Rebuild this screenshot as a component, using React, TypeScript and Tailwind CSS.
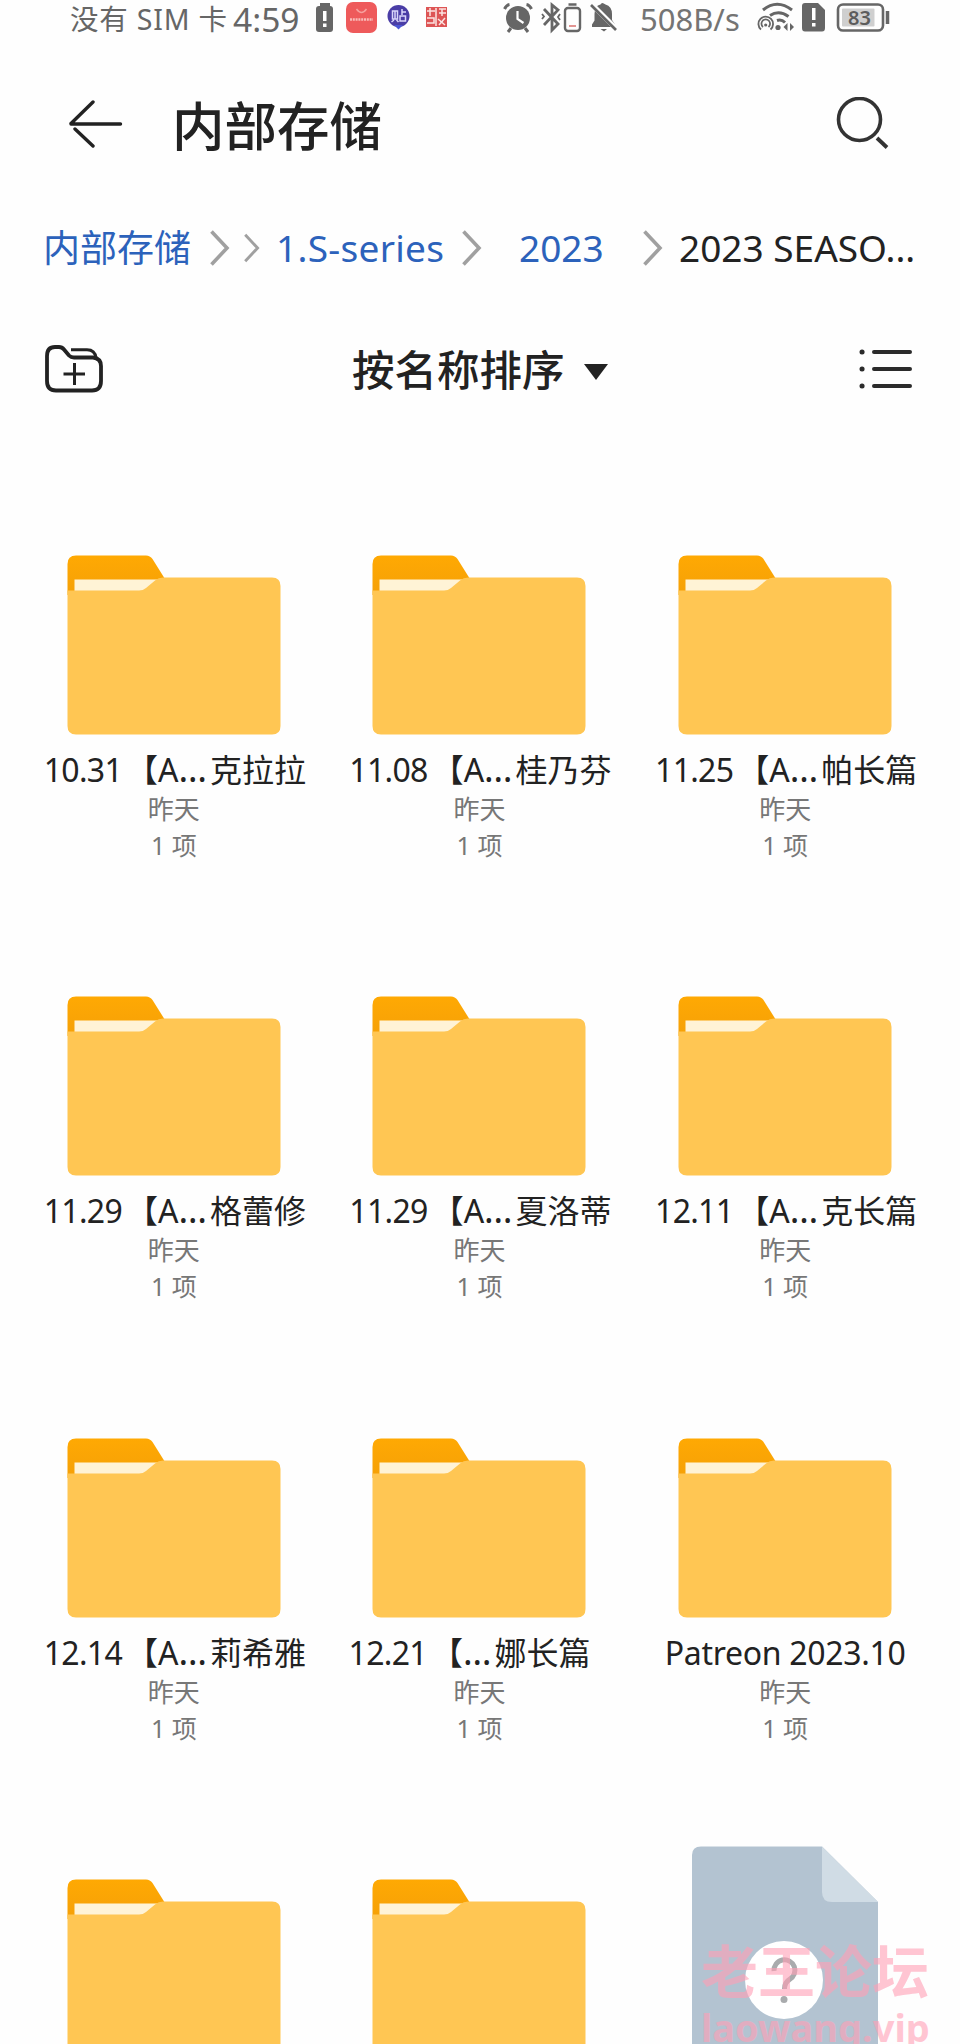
interface Item {
  date?: string;
  head?: string;
  tail?: string;
  name?: string;
  alignLeft?: boolean;
}

const items: Item[] = [
  { date: "10.31", head: "【A", tail: "克拉拉" },
  { date: "11.08", head: "【A", tail: "桂乃芬" },
  { date: "11.25", head: "【A", tail: "帕长篇" },
  { date: "11.29", head: "【A", tail: "格蕾修" },
  { date: "11.29", head: "【A", tail: "夏洛蒂" },
  { date: "12.11", head: "【A", tail: "克长篇" },
  { date: "12.14", head: "【A", tail: "莉希雅" },
  { date: "12.21", head: "【", tail: "娜长篇", alignLeft: true },
  { name: "Patreon 2023.10" },
];

function FolderIcon() {
  return (
    <svg className="block w-[214px] h-[180px]" viewBox="0 0 214 180">
      <defs>
        <linearGradient id="tab" x1="0" y1="0" x2="0" y2="1">
          <stop offset="0" stopColor="#ffa903" />
          <stop offset="1" stopColor="#f5a007" />
        </linearGradient>
      </defs>
      <path d="M0.5 40V9Q0.5 0.5 9 0.5H79Q83 0.5 85.500 4L98 24V40Z" fill="url(#tab)" />
      <path d="M7.500 24.500H94V40H7.500Z" fill="#fff3d6" />
      <path
        d="M0.5 35.500H72Q76 35.500 79 33L88 25.500Q91.500 22.500 96 22.500H205Q213.500 22.500 213.500 31V171Q213.500 179.500 205 179.500H9Q0.5 179.500 0.5 171Z"
        fill="#ffc653"
      />
    </svg>
  );
}

function UnknownFileIcon() {
  return (
    <svg className="block w-[188px] h-[240px]" viewBox="0 0 188 240">
      <path d="M1 240V9Q1 0.5 10 0.5H131L187 56V240Z" fill="#b3c3d1" />
      <path d="M131 0.5L187 56H141Q131 56 131 46Z" fill="#d0dce5" />
      <circle cx="93" cy="134" r="39" fill="#fff" />
      <path
        d="M83 125A10.500 10.500 0 1 1 98.500 133.500Q93.500 136.500 93.500 143"
        fill="none"
        stroke="#a9abad"
        strokeWidth="5"
      />
      <circle cx="93" cy="153.500" r="3.500" fill="#a9abad" />
    </svg>
  );
}

function Chevron({ className }: { className?: string }) {
  return (
    <svg className={className} viewBox="0 0 20 36" fill="none" stroke="#a0a0a0" strokeWidth="3.600">
      <path d="M1.500 1.500L17 18L1.500 34.500" />
    </svg>
  );
}

function ItemName({ item }: { item: Item }) {
  if (item.name) {
    return <div className="mt-[12px] h-[46px] whitespace-nowrap text-[32px] leading-[46px] tracking-[-0.3px]">{item.name}</div>;
  }
  return (
    <div className={`mt-[12px] flex h-[46px] items-baseline whitespace-nowrap pl-[2px] text-[32px] leading-[46px] ${item.alignLeft ? "pr-[22px]" : ""}`}>
      <span className="tracking-[-0.7px]">{item.date}</span>
      <span className="ml-[4px]">{item.head}</span>
      <span className="text-[36px] leading-[40px] tracking-[3px]">…</span>
      <span>{item.tail}</span>
    </div>
  );
}

function StatusBar() {
  return (
    <div className="flex h-[40px] items-start pl-[70px] text-[#666]">
      <span className="w-[163px] shrink-0 whitespace-nowrap text-[28.5px] leading-[38px] tracking-[0.8px]">没有 SIM 卡</span>
      <span className="w-[81px] shrink-0 text-[33.5px] leading-[38px]">4:59</span>

      {/* 左侧通知图标 */}
      <svg className="h-[40px] w-[150px] shrink-0" viewBox="314 0 150 40">
        <path d="M320 3h10v3h-10z" fill="#666" />
        <rect x="316" y="6" width="17" height="26" rx="3" fill="#666" />
        <path d="M323 11h3.500v10H323zM323 23.500h3.500v3.500H323z" fill="#fff" />
        <rect x="346" y="2" width="31" height="31" rx="7" fill="#ee5a5b" />
        <path d="M356.500 9q5 7 10 0" fill="none" stroke="#f6a09d" strokeWidth="1.500" />
        <path d="M350 19.500h23" stroke="#f9bcb9" strokeWidth="2.500" strokeDasharray="2 0.8" />
        <circle cx="398.500" cy="16" r="11" fill="#4a3da6" />
        <path d="M394 25l4.500 4.500 4.500-4.500z" fill="#4a55d4" />
        <path d="M392.500 11h5v8h-5zM395 11v8M391.500 22l2.500-2M398.500 22l-2-2M402 9v6M402 12h4M400 16h5.500v5H400z" fill="none" stroke="#d9d5fa" strokeWidth="1.500" />
        <rect x="426" y="7" width="21" height="20" fill="#dd5555" />
        <path d="M427 11h8M430 8v8M436 8v18M439 9h7M439 13h7M442 9v7M427 18h7v5h-7M438 19l7 6M445 18l-6 7" fill="none" stroke="#fbe3e1" strokeWidth="1.500" />
      </svg>

      <div className="grow" />

      {/* 闹钟、蓝牙、静音 */}
      <svg className="h-[40px] w-[120px] shrink-0" viewBox="502 0 120 40">
        <circle cx="518" cy="18" r="12" fill="#666" />
        <path d="M511 28l-3 4M525 28l3 4" stroke="#666" strokeWidth="3" />
        <path d="M504.500 9q2-4 5-4.500M531.500 9q-2-4-5-4.500" fill="none" stroke="#666" strokeWidth="3" />
        <path d="M517.500 11v8l6 4" fill="none" stroke="#fff" strokeWidth="2.200" />
        <path d="M544 9l14 15-6 6V5l6 5-14 15" fill="none" stroke="#666" strokeWidth="2.800" />
        <path d="M542 14l2 2.500-2 2.500M560 14l-2 3 2 3" fill="none" stroke="#666" strokeWidth="1.800" />
        <path d="M568.500 4.500h8" stroke="#666" strokeWidth="2.500" />
        <rect x="565" y="8" width="15" height="23" rx="3" fill="none" stroke="#666" strokeWidth="2.400" />
        <path d="M569 26h7" stroke="#d9706e" strokeWidth="1.500" />
        <path d="M592 27V24.500l2.500-4V14q0-8.500 6-9.500 1.200-3 5 0 6.500 2 6.500 9.500v6l3 4.500V27z" fill="#666" />
        <path d="M591 3.500L616 28.500" stroke="#fefefe" strokeWidth="5" />
        <path d="M591 5L616 30" stroke="#666" strokeWidth="2.600" />
        <path d="M600.500 29h6.500l-3 2.500z" fill="#666" />
      </svg>

      <span className="ml-[18px] w-[116px] shrink-0 whitespace-nowrap text-[31px] leading-[38px] text-[#747474]">508B/s</span>

      {/* 网络、SIM 与电池 */}
      <svg className="h-[40px] w-[204px] shrink-0" viewBox="756 0 204 40" fill="none" stroke="#666">
        <path d="M763 10q14-11.500 29 0M770 15.500q9-6 18.500 1M777 20.500q4.500-1.500 8 2" strokeWidth="3" />
        <path d="M761 29.500a7.300 7.300 0 1 1 9.500 0M763 27a4.300 4.300 0 1 1 5.500 0" strokeWidth="1.800" />
        <circle cx="765.700" cy="25" r="1.600" fill="#666" stroke="none" />
        <circle cx="778" cy="27.500" r="2.600" fill="#666" stroke="none" />
        <path d="M783.500 27l4-4v8zM794 27l-4-4v8z" fill="#666" stroke="none" />
        <path d="M802 6q0-3 3-3h13l7 7v18q0 3.500-3 3.500h-17q-3 0-3-3.500z" fill="#666" stroke="none" />
        <path d="M812 8h3.500v12H812zM812 23h3.500v3.500H812z" fill="#fff" stroke="none" />
        <rect x="838" y="4.500" width="45" height="26" rx="5" strokeWidth="2.600" />
        <rect x="842" y="8.500" width="32.500" height="18" rx="1" fill="#cfcfcf" stroke="none" />
        <path d="M887.500 11v13" strokeWidth="3.500" />
        <text x="848" y="25" fontSize="20" fontWeight="600" fill="#5c5c5c" stroke="none" fontFamily="Noto Sans">
          83
        </text>
      </svg>
    </div>
  );
}

export default function App() {
  return (
    <div className="relative h-[2044px] w-[960px] overflow-hidden bg-[#fefefe] font-['Noto_Sans','Noto_Sans_CJK_SC',sans-serif] text-[#222]">
      <StatusBar />

      {/* 标题栏 */}
      <header className="flex h-[168px] items-center pl-[69px]">
        <svg className="h-[50px] w-[54px]" viewBox="0 0 54 50" fill="none" stroke="#222" strokeWidth="3.400" strokeLinecap="round">
          <path d="M51.500 25H2M24 3L2 24.500M6 30L24 47" />
        </svg>
        <h1 className="ml-[49px] mt-[3px] text-[52.5px] font-medium leading-[60px]">内部存储</h1>
        <svg className="ml-auto mr-[70px] h-[54px] w-[54px]" viewBox="0 0 54 54" fill="none" stroke="#333" strokeWidth="3.600">
          <circle cx="23.500" cy="22.500" r="21" />
          <path d="M41 41L51 50.500" strokeWidth="3.800" />
        </svg>
      </header>

      {/* 路径导航 */}
      <nav className="mt-[2px] flex h-[76px] items-center whitespace-nowrap pl-[43px] text-[37px] leading-[50px] text-[#2c62bb]">
        <span className="w-[167px] shrink-0">内部存储</span>
        <Chevron className="h-[36px] w-[20px] shrink-0" />
        <Chevron className="ml-[14px] h-[32px] w-[16px] shrink-0" />
        <span className="ml-[16px] w-[186px] shrink-0 tracking-[0.3px]">1.S-series</span>
        <Chevron className="h-[36px] w-[20px] shrink-0" />
        <span className="ml-[37px] w-[124px] shrink-0">2023</span>
        <Chevron className="h-[36px] w-[20px] shrink-0" />
        <span className="ml-[16px] text-[#222]">2023 SEASO...</span>
      </nav>

      {/* 工具栏 */}
      <div className="flex h-[166px] items-center pl-[44px]">
        <svg className="h-[50px] w-[60px]" viewBox="0 0 60 50" fill="none" stroke="#222" strokeWidth="3.800">
          <path d="M3 12Q3 3 11 3H15Q18 3 20 5.500L25 11.500Q27 13.500 30 13.500H49Q57 14.500 57 22V37Q57 46.500 48 46.500H12Q3 46.500 3 37Z" />
          <path d="M27 5.800H43Q51 5.800 52 14" strokeWidth="3" />
          <path d="M30.500 19V41M19.500 30H41" strokeWidth="3" />
        </svg>
        <div className="ml-[248px] flex items-center">
          <span className="mt-[1px] text-[42.5px] font-medium leading-[50px]">按名称排序</span>
          <svg className="ml-[19px] mt-[5px] h-[16px] w-[24px]" viewBox="0 0 24 16">
            <path d="M0 0H24L12 16Z" fill="#222" />
          </svg>
        </div>
        <svg className="ml-auto mr-[47px] h-[42px] w-[54px]" viewBox="0 0 54 42" fill="none" stroke="#2b2b2b" strokeWidth="4" strokeLinecap="round">
          <path d="M15 4H51M15 21H51M15 38H51" />
          <path d="M3 4H3.100M3 21H3.100M3 38H3.100" strokeWidth="5" />
        </svg>
      </div>

      {/* 文件网格 */}
      <main className="ml-[21px] mt-[103px] grid w-[917px] auto-rows-[441.3px] grid-cols-3">
        {items.map((item, i) => (
          <div key={i} className="flex flex-col items-center">
            <FolderIcon />
            <ItemName item={item} />
            <div className="mt-[-2px] text-[26px] leading-[36px] text-[#777]">昨天</div>
            <div className="text-[25px] leading-[36px] text-[#777]">1 项</div>
          </div>
        ))}
        <div className="flex justify-center">
          <FolderIcon />
        </div>
        <div className="flex justify-center">
          <FolderIcon />
        </div>
        <div className="-mt-[33px] flex justify-center">
          <UnknownFileIcon />
        </div>
      </main>

      {/* 水印 */}
      <div className="absolute left-[701px] top-[1940px] whitespace-nowrap font-bold text-[#ff9fb5]/60">
        <div className="text-[57px] leading-[62px]">老王论坛</div>
        <div className="text-[38px] leading-[50px]">laowang.vip</div>
      </div>
    </div>
  );
}
